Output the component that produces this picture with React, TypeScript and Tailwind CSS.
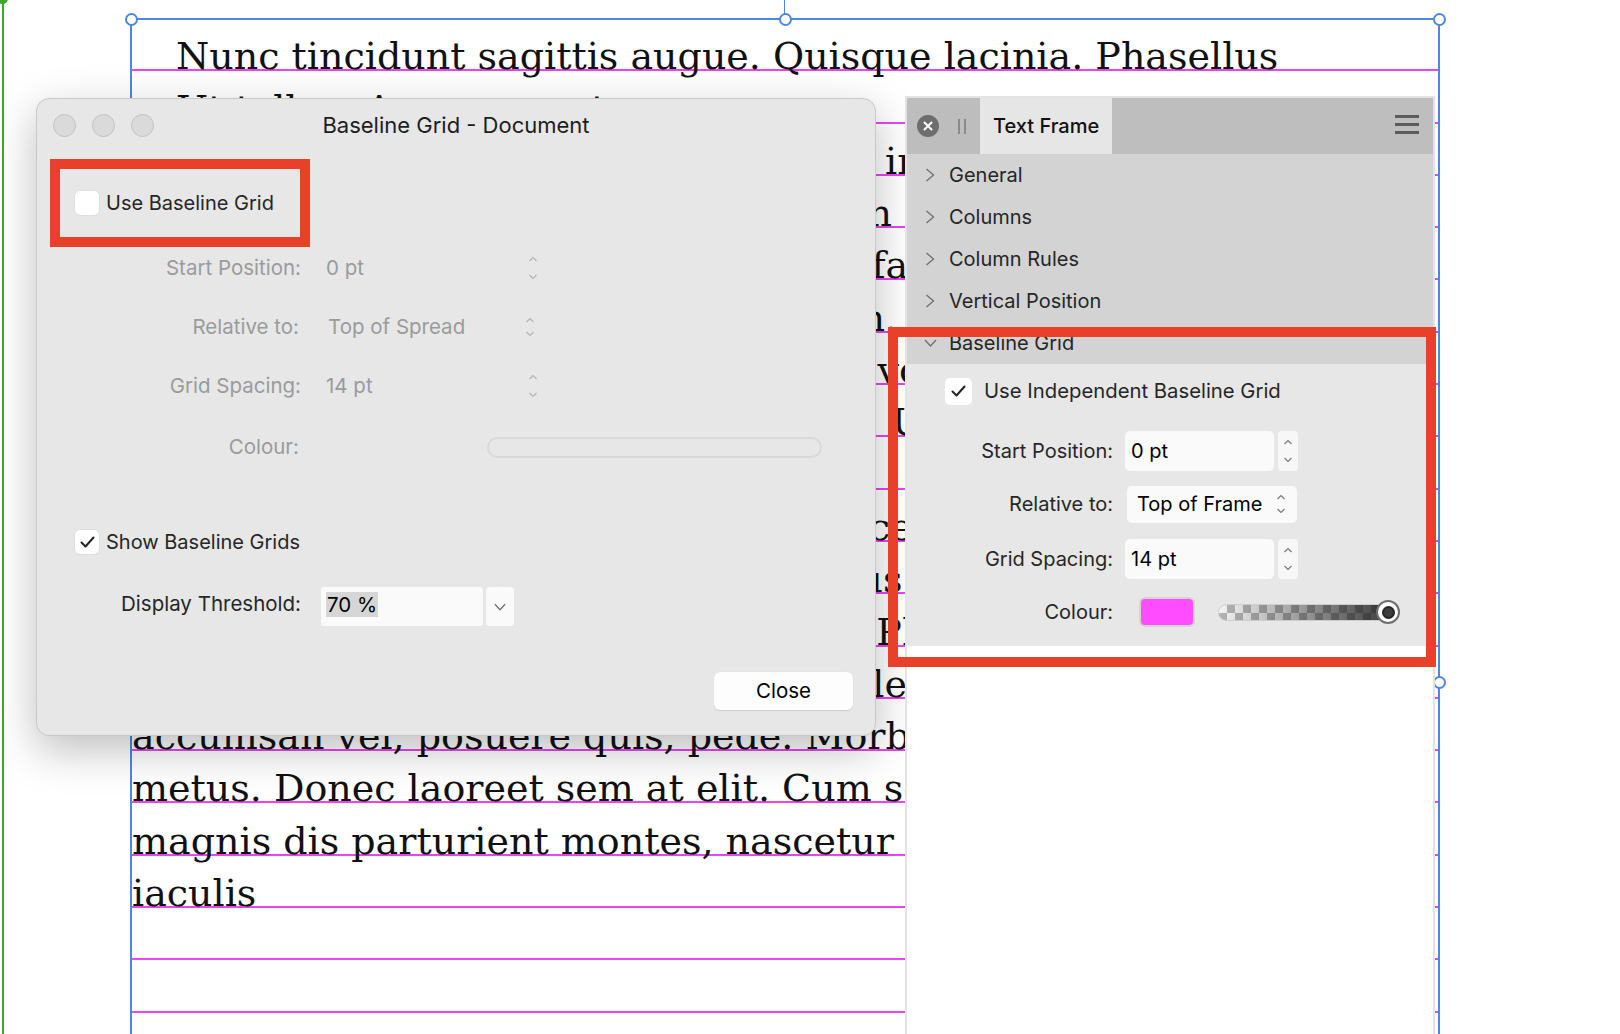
import React from 'react';

interface DocLine {
  text: string;
  indent?: boolean;
}

const docLines: DocLine[] = [
  { text: 'Nunc tincidunt sagittis augue. Quisque lacinia. Phasellus', indent: true },
  { text: 'Ut tellus. Aenean eget quam.', indent: true },
  { text: 'tempus. Vestibulum ante ipsum primis in faucibus orci' },
  { text: 'et ultrices posuere cubilia Curae; Proin sollicitudin' },
  { text: 'Mauris posuere. Etiam vel sem. Nulla facilisi. Sed' },
  { text: 'feugiat. Nam sagittis mauris non quam. Vestibulum' },
  { text: 'ut urna. Fusce ac libero. Aliquam erat volutpat. Sed' },
  { text: 'Aenean dictum dolor. Nullam in lorem. Ut adipiscing' },
  { text: 'elit vel quam.' },
  { text: 'Maecenas rutrum ligula ut lectus. Fusce congue massa' },
  { text: 'vitae neque. Integer nec lacus. Vivamus nisl ultricies' },
  { text: 'arcu, eu congue eros lectus quis velit. Phasellus nec' },
  { text: 'sem. Proin viverra, enim nec congue elementum, nunc' },
  { text: 'accumsan vel, posuere quis, pede. Morbi sit amet' },
  { text: 'metus. Donec laoreet sem at elit. Cum sociis natoque' },
  { text: 'magnis dis parturient montes, nascetur ridiculus mus.' },
  { text: 'iaculis' },
  { text: '' },
  { text: '' },
  { text: '' },
];

// small up/down arrows used by steppers and popups
const UpDown = ({ h, className }: { h: number; className: string }) => (
  <svg width="10" height={h} viewBox={`0 0 10 ${h}`} fill="none" stroke="currentColor" strokeWidth="1.2" className={className}>
    <polyline points="1.5,6 5,2.5 8.5,6" />
    <polyline points={`1.5,${h - 6} 5,${h - 2.5} 8.5,${h - 6}`} />
  </svg>
);

const CheckMark = () => (
  <svg width="15" height="12" viewBox="0 0 15 12" fill="none" stroke="#222" strokeWidth="2" strokeLinecap="round" strokeLinejoin="round">
    <polyline points="1.5,6.5 5.5,10.5 13.5,1.5" />
  </svg>
);

const ChevronRight = () => (
  <svg width="10" height="14" viewBox="0 0 10 14" fill="none" stroke="#6f6f6f" strokeWidth="1.3">
    <polyline points="1.5,1 8.5,7 1.5,13" />
  </svg>
);

const ChevronDown = ({ className = '' }: { className?: string }) => (
  <svg width="13" height="8" viewBox="0 0 13 8" fill="none" stroke="#6f6f6f" strokeWidth="1.3" className={className}>
    <polyline points="1,1 6.5,7 12,1" />
  </svg>
);

const Handle = ({ className }: { className: string }) => (
  <div className={`absolute w-[13px] h-[13px] rounded-full bg-white border-2 border-[#4f86e0] ${className}`} />
);

const TextFrame = () => (
  <>
    <div className="absolute left-[2px] top-0 bottom-0 w-[2px] bg-[#45a32f]" />
    <div className="absolute left-[-3px] top-[-7px] w-[11px] h-[11px] rounded-full bg-[#45a32f]" />
    <div className="absolute left-[784px] top-0 w-px h-[14px] bg-[#4f86e0]" />
    <div className="absolute left-[130px] top-[18px] w-[1310px] h-[1040px] border-x-2 border-t-2 border-[#4f86e0]">
      <div className="-mt-px flex flex-col">
        {docLines.map((line, i) => (
          <div key={i} className="h-[52.3px] shrink-0 flex items-end border-b-2 border-[#ea44f0]">
            <span
              className={`-mb-[6px] whitespace-nowrap leading-none text-[38px] text-[#111] font-['DejaVu_Serif',serif] ${
                line.indent ? 'pl-[44px]' : ''
              }`}
            >
              {line.text}
            </span>
          </div>
        ))}
      </div>
    </div>
    <Handle className="left-[124.5px] top-[12.5px]" />
    <Handle className="left-[778.5px] top-[12.5px]" />
    <Handle className="left-[1432.5px] top-[12.5px]" />
    <Handle className="left-[1432.5px] top-[675.5px]" />
  </>
);

const DialogCheck = ({ checked }: { checked?: boolean }) => (
  <div className="w-[24px] h-[24px] rounded-[5px] bg-white shadow-[0_0_0_0.5px_rgba(0,0,0,0.08)] flex items-center justify-center">
    {checked && <CheckMark />}
  </div>
);

const BaselineDialog = () => (
  <div className="absolute left-[36px] top-[98px] w-[840px] h-[638px] rounded-[13px] bg-[#e7e7e7] border border-[#c9c9c9] shadow-[0_14px_44px_rgba(0,0,0,0.26)] flex flex-col text-[20.5px] text-[#262626]">
    <div className="h-[52px] grid grid-cols-[1fr_auto_1fr] items-center">
      <div className="flex items-center gap-[16px] pl-[15.5px]">
        <div className="w-[23px] h-[23px] rounded-full bg-[#dadada] border border-[#c2c2c2]" />
        <div className="w-[23px] h-[23px] rounded-full bg-[#dadada] border border-[#c2c2c2]" />
        <div className="w-[23px] h-[23px] rounded-full bg-[#dadada] border border-[#c2c2c2]" />
      </div>
      <div className="text-[22px] text-[#1d1d1d]">Baseline Grid - Document</div>
      <div />
    </div>

    <div className="ml-[13px] mt-[8px] w-[260px] h-[88px] border-[10px] border-[#e9402a] flex items-center pl-[15px] gap-[7px] text-[20px]">
      <DialogCheck />
      <span>Use Baseline Grid</span>
    </div>

    <div className="mt-[1px] h-[40px] flex items-center text-[#9b9b9b]">
      <div className="w-[264px] text-right">Start Position:</div>
      <div className="ml-[25px] w-[202px]">0 pt</div>
      <UpDown h={26} className="text-[#b4b4b4]" />
    </div>
    <div className="mt-[19px] h-[40px] flex items-center text-[#9b9b9b]">
      <div className="w-[262px] text-right">Relative to:</div>
      <div className="ml-[29px] w-[197px]">Top of Spread</div>
      <UpDown h={22} className="text-[#b4b4b4]" />
    </div>
    <div className="mt-[19px] h-[40px] flex items-center text-[#9b9b9b]">
      <div className="w-[264px] text-right">Grid Spacing:</div>
      <div className="ml-[25px] w-[202px]">14 pt</div>
      <UpDown h={26} className="text-[#b4b4b4]" />
    </div>
    <div className="mt-[21px] h-[40px] flex items-center text-[#9b9b9b]">
      <div className="w-[262px] text-right">Colour:</div>
      <div className="ml-[188px] w-[335px] h-[21px] rounded-full border-2 border-[#d9d9d9]" />
    </div>

    <div className="mt-[63px] h-[24px] flex items-center pl-[38px] gap-[7px] text-[20px]">
      <DialogCheck checked />
      <span>Show Baseline Grids</span>
    </div>

    <div className="mt-[33px] flex items-start">
      <div className="w-[264px] h-[34px] flex items-center justify-end">Display Threshold:</div>
      <div className="ml-[20px] w-[162px] h-[39px] bg-[#fafafa] rounded-[3px] flex items-center pl-[5px] pb-[4px]">
        <span className="bg-[#d6d6d6] text-black px-[1px] leading-[25px]">70 %</span>
      </div>
      <div className="ml-[3px] w-[28px] h-[39px] bg-[#fafafa] rounded-[4px] flex items-center justify-center">
        <ChevronDown className="w-[12px]" />
      </div>
    </div>

    <button className="mt-[46px] mr-[22px] self-end w-[139px] h-[38px] rounded-[6px] bg-[#fdfdfd] text-black shadow-[0_0.5px_1px_rgba(0,0,0,0.12)]">
      Close
    </button>
  </div>
);

const sections = ['General', 'Columns', 'Column Rules', 'Vertical Position'];

const TextFramePanel = () => (
  <div className="absolute left-[905px] top-[96px] w-[530px] h-[940px] border-2 border-b-0 border-[#e3e3e3] bg-white flex flex-col text-[20px] text-[#262626]">
    <div className="h-[56px] flex shrink-0">
      <div className="w-[73px] bg-[#bdbdbd] flex items-center">
        <div className="ml-[10px] w-[22px] h-[22px] rounded-full bg-[#6d6d6d] flex items-center justify-center">
          <svg width="10" height="10" viewBox="0 0 10 10" stroke="white" strokeWidth="2" strokeLinecap="round">
            <line x1="1.5" y1="1.5" x2="8.5" y2="8.5" />
            <line x1="8.5" y1="1.5" x2="1.5" y2="8.5" />
          </svg>
        </div>
        <div className="ml-[19px] flex gap-[4px]">
          <div className="w-[2px] h-[15px] bg-[#8b8b8b]" />
          <div className="w-[2px] h-[15px] bg-[#8b8b8b]" />
        </div>
      </div>
      <div className="w-[132px] bg-[#e6e6e6] flex items-center pl-[13px] font-medium text-[#111]">Text Frame</div>
      <div className="flex-1 bg-[#bebebe] flex items-center justify-end pr-[14px]">
        <div className="flex flex-col gap-[5px] mb-[4px]">
          <div className="w-[24px] h-[3px] bg-[#5c5c5c]" />
          <div className="w-[24px] h-[3px] bg-[#5c5c5c]" />
          <div className="w-[24px] h-[3px] bg-[#5c5c5c]" />
        </div>
      </div>
    </div>

    <div className="bg-[#d3d3d3] flex flex-col">
      {sections.map((s) => (
        <div key={s} className="h-[42px] flex items-center pl-[18px]">
          <ChevronRight />
          <span className="ml-[14px]">{s}</span>
        </div>
      ))}
      <div className="h-[42px] flex items-center pl-[17px]">
        <ChevronDown />
        <span className="ml-[12px]">Baseline Grid</span>
      </div>
    </div>

    <div className="bg-[#e7e7e7] h-[282px] flex flex-col shrink-0">
      <div className="mt-[13px] h-[28px] pl-[38px] flex items-center">
        <div className="w-[27px] h-[27px] rounded-[5px] bg-white flex items-center justify-center">
          <CheckMark />
        </div>
        <span className="ml-[12px] text-[20.3px]">Use Independent Baseline Grid</span>
      </div>

      <div className="mt-[26px] h-[40px] flex items-center">
        <div className="w-[206px] text-right">Start Position:</div>
        <div className="ml-[12px] w-[149px] h-[40px] bg-[#fafafa] rounded-[5px] flex items-center pl-[6px] text-black">0 pt</div>
        <div className="ml-[4px] w-[20px] h-[40px] bg-[#f7f7f7] rounded-[4px] flex items-center justify-center">
          <UpDown h={26} className="text-[#7a7a7a]" />
        </div>
      </div>

      <div className="mt-[13px] h-[40px] flex items-center">
        <div className="w-[206px] text-right">Relative to:</div>
        <div className="ml-[14px] w-[170px] h-[37px] bg-[#fafafa] rounded-[5px] flex items-center justify-between pl-[10px] pr-[11px] text-black">
          <span>Top of Frame</span>
          <UpDown h={22} className="text-[#7a7a7a]" />
        </div>
      </div>

      <div className="mt-[15px] h-[40px] flex items-center">
        <div className="w-[206px] text-right">Grid Spacing:</div>
        <div className="ml-[12px] w-[149px] h-[40px] bg-[#fafafa] rounded-[5px] flex items-center pl-[6px] text-black">14 pt</div>
        <div className="ml-[4px] w-[20px] h-[40px] bg-[#f7f7f7] rounded-[4px] flex items-center justify-center">
          <UpDown h={26} className="text-[#7a7a7a]" />
        </div>
      </div>

      <div className="mt-[13px] h-[40px] flex items-center">
        <div className="w-[206px] text-right">Colour:</div>
        <div className="ml-[26px] w-[56px] h-[30px] rounded-[6px] border-2 border-[#d4d4d4] bg-[#ff4cff]" />
        <div className="ml-[23px] relative w-[182px] h-[24px] flex items-center">
          <div className="w-[174px] h-[17px] rounded-full border border-[#cdcdcd] [background:linear-gradient(to_right,rgba(25,25,25,0)_0%,rgba(25,25,25,0.85)_100%),repeating-conic-gradient(#b5b5b5_0%_25%,#f4f4f4_0%_50%)_0_0/16px_16px]" />
          <div className="absolute right-0 top-0 w-[24px] h-[24px] rounded-full bg-white border-2 border-[#6e6e6e] flex items-center justify-center">
            <div className="w-[13px] h-[13px] rounded-full bg-[#3d3d3d] border-2 border-[#262626]" />
          </div>
        </div>
      </div>
    </div>
  </div>
);

export default function App() {
  return (
    <div className="relative w-[1620px] h-[1034px] overflow-hidden bg-white font-['Inter',sans-serif]">
      <TextFrame />
      <BaselineDialog />
      <TextFramePanel />
      <div className="absolute left-[888px] top-[327px] w-[548px] h-[340px] border-[10px] border-[#e9402a] pointer-events-none" />
    </div>
  );
}
